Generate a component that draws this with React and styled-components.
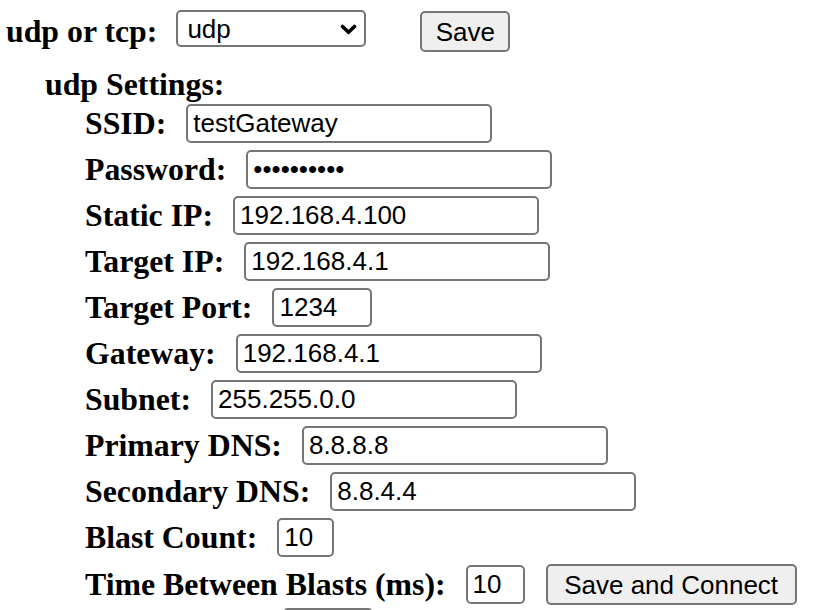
import React from 'react';
import styled, { createGlobalStyle } from 'styled-components';

const Global = createGlobalStyle`
  html, body { margin: 0; padding: 0; background: #fff; overflow: hidden; }
  body { font-family: "Liberation Serif", "Times New Roman", serif; color: #000; }
`;

const Page = styled.div`
  display: flex;
  flex-direction: column;
  padding: 10px 0 0 6px;
`;

const TopRow = styled.div`
  display: flex;
  align-items: flex-start;
`;

const Label = styled.label`
  font-family: "Liberation Serif", "Times New Roman", serif;
  font-weight: bold;
  font-size: 31.8px;
  line-height: 36px;
  white-space: nowrap;
  margin-top: ${(p) => p.$top || 0}px;
`;

const SelectWrap = styled.div`
  position: relative;
  margin-left: 19px;
  width: 190px;
  height: 37px;
`;

const Select = styled.select`
  appearance: none;
  -webkit-appearance: none;
  box-sizing: border-box;
  width: 100%;
  height: 100%;
  margin: 0;
  border: 2px solid #767676;
  border-radius: 5px;
  background: #fff;
  color: #000;
  font-family: "Liberation Sans", Arial, sans-serif;
  font-size: 26px;
  padding: 0 0 0 9px;
  outline: none;
`;

const Chevron = styled.svg`
  position: absolute;
  right: 9px;
  top: 14px;
  pointer-events: none;
`;

const Button = styled.button`
  box-sizing: border-box;
  height: 41px;
  width: ${(p) => p.$w}px;
  margin: ${(p) => p.$top || 0}px 0 0 ${(p) => p.$left || 0}px;
  padding: 0;
  border: 2px solid #767676;
  border-radius: 5px;
  background: #efefef;
  color: #000;
  font-family: "Liberation Sans", Arial, sans-serif;
  font-size: 26px;
  line-height: 1;
`;

const SectionTitle = styled.div`
  font-weight: bold;
  font-size: 31.8px;
  line-height: 36px;
  margin: 15px 0 1px 39px;
`;

const Fields = styled.div`
  display: flex;
  flex-direction: column;
  gap: 7px;
  padding-left: 79px;
`;

const Row = styled.div`
  display: flex;
  align-items: center;
`;

const Input = styled.input`
  box-sizing: border-box;
  width: ${(p) => p.$w || 306}px;
  height: 39px;
  margin: 0 0 0 20px;
  border: 2px solid #767676;
  border-radius: 5px;
  padding: 0 5px;
  background: #fff;
  color: #000;
  font-family: "Liberation Sans", Arial, sans-serif;
  font-size: 26px;
  outline: none;
`;

const BottomRow = styled.div`
  display: flex;
  padding-left: 277px;
  margin-top: 3px;
`;

const fields = [
  { label: 'SSID:', value: 'testGateway' },
  { label: 'Password:', value: '1234567890', type: 'password' },
  { label: 'Static IP:', value: '192.168.4.100' },
  { label: 'Target IP:', value: '192.168.4.1' },
  { label: 'Target Port:', value: '1234', w: 100 },
  { label: 'Gateway:', value: '192.168.4.1' },
  { label: 'Subnet:', value: '255.255.0.0' },
  { label: 'Primary DNS:', value: '8.8.8.8' },
  { label: 'Secondary DNS:', value: '8.8.4.4' },
  { label: 'Blast Count:', value: '10', w: 57 },
];

export default function App() {
  return (
    <>
      <Global />
      <Page>
        <TopRow>
          <Label $top={4}>udp or tcp:</Label>
          <SelectWrap>
            <Select defaultValue="udp">
              <option value="udp">udp</option>
              <option value="tcp">tcp</option>
            </Select>
            <Chevron width="17" height="11" viewBox="0 0 17 11">
              <path d="M2.5 2.5 L8.5 8.3 L14.5 2.5" fill="none" stroke="#000" strokeWidth="3.6" strokeLinecap="round" strokeLinejoin="round" />
            </Chevron>
          </SelectWrap>
          <Button $w={90} $left={54} $top={1}>Save</Button>
        </TopRow>
        <SectionTitle>udp Settings:</SectionTitle>
        <Fields>
          {fields.map((f) => (
            <Row key={f.label}>
              <Label>{f.label}</Label>
              <Input type={f.type || 'text'} defaultValue={f.value} $w={f.w} />
            </Row>
          ))}
          <Row>
            <Label>Time Between Blasts (ms):</Label>
            <Input defaultValue="10" $w={59} />
            <Button $w={251} $left={21}>Save and Connect</Button>
          </Row>
        </Fields>
        <BottomRow>
          <Button $w={90} aria-label="Back" />
        </BottomRow>
      </Page>
    </>
  );
}
